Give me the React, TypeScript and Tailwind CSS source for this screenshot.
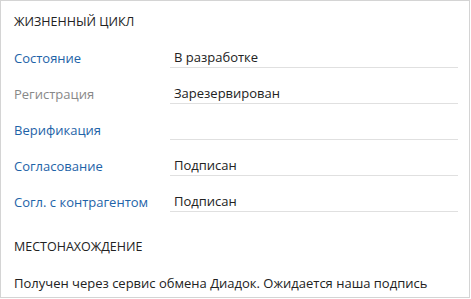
const rows = [
  { label: 'Состояние', value: 'В разработке', muted: false },
  { label: 'Регистрация', value: 'Зарезервирован', muted: true },
  { label: 'Верификация', value: '', muted: false },
  { label: 'Согласование', value: 'Подписан', muted: false },
  { label: 'Согл. с контрагентом', value: 'Подписан', muted: false },
];

export default function App() {
  return (
    <div className="w-[471px] h-[299px] bg-white" style={{ fontFamily: '"Open Sans", "Noto Sans", sans-serif' }}>
      <div className="w-[470px] h-[298px] border border-[#d4d4d4] pl-[13px] pr-[11px] text-[13px] leading-[20px]">
        <div className="pt-[11px] text-[#222] text-[12.5px]">ЖИЗНЕННЫЙ ЦИКЛ</div>
        {rows.map((r) => (
          <div key={r.label} className="flex items-end h-[36px]">
            <div className={`w-[156px] ${r.muted ? 'text-[#888]' : 'text-[#1e63a8]'}`}>{r.label}</div>
            <div className="flex-1 border-b border-[#e0e0e0] pl-[4px] text-[#222] h-[21px]">{r.value}</div>
          </div>
        ))}
        <div className="mt-[25px] text-[#222] text-[12.5px]">МЕСТОНАХОЖДЕНИЕ</div>
        <div className="mt-[16px] text-[#222]">Получен через сервис обмена Диадок. Ожидается наша подпись</div>
      </div>
    </div>
  );
}
